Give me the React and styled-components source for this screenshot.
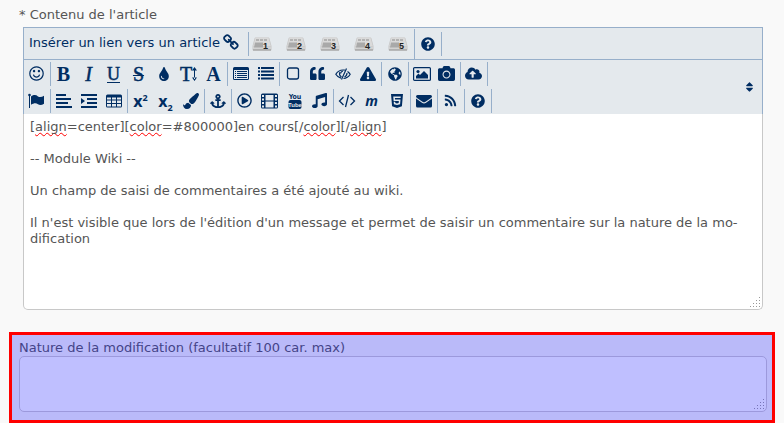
import React from "react";
import styled, { createGlobalStyle, css } from "styled-components";
import {
  FaTint, FaQuoteLeft, FaExclamationTriangle, FaGlobeAmericas, FaCamera,
  FaCloudUploadAlt, FaPaintBrush, FaAnchor, FaRegPlayCircle, FaMusic,
  FaHtml5, FaRss, FaQuestionCircle, FaSort,
} from "react-icons/fa";

const NAVY = "#002d62";
const LINE = "#97afca";

const GlobalStyle = createGlobalStyle`
  * { box-sizing: border-box; }
  body {
    margin: 0;
    background: #f9f9f9;
    color: #555;
    font: 13px/16px "DejaVu Sans", Verdana, sans-serif;
  }
  button, textarea { font: inherit; color: inherit; }
`;

const Form = styled.form`
  padding: 7px 9px 0;
`;

const Field = styled.div`
  padding: 0 12px 0 10px;
`;

const Label = styled.label`
  display: block;
`;

const Editor = styled.div`
  margin: 4px 0 0 4px;
`;

const Toolbar = styled.div`
  border: 1px solid ${LINE};
  border-bottom: 0;
  background: #e4e9ed;
  color: ${NAVY};
`;

const LinkBar = styled.div`
  display: flex;
  align-items: center;
  height: 32px;
  border-bottom: 1px solid ${LINE};
`;

const LinkGroup = styled.div`
  display: flex;
  align-items: center;
  gap: 8px;
  height: ${(p) => (p.$tall ? 30 : 24)}px;
  padding: ${(p) => p.$pad || "0"};
  border-right: 1px solid ${LINE};
`;

const LinkButton = styled.button`
  display: flex;
  align-items: center;
  justify-content: center;
  gap: 3px;
  padding: 0 0 2px;
  border: 0;
  background: none;
  white-space: nowrap;
  cursor: pointer;
`;

const SlotButton = styled(LinkButton)`
  width: 26px;
  padding: 0;
`;

const Tools = styled.div`
  display: flex;
  align-items: center;
  justify-content: space-between;
  padding-right: 8px;
`;

const ToolRows = styled.div`
  display: grid;
`;

const ToolRow = styled.div`
  display: flex;
  height: 27px;
  align-items: center;
`;

const ToolGroup = styled.div`
  display: flex;
  height: 24px;
  padding-right: 1px;
  border-right: 1px solid ${LINE};
`;

const ToolButton = styled.button`
  display: flex;
  align-items: center;
  justify-content: center;
  width: 25px;
  height: 24px;
  padding: 0;
  border: 0;
  background: none;
  line-height: 24px;
  cursor: pointer;
`;

const SortButton = styled(ToolButton)`
  width: 9px;
`;

const Glyph = styled.span`
  font-family: ${(p) => (p.$sans ? '"Open Sans", sans-serif' : '"Liberation Serif", serif')};
  font-size: ${(p) => p.$size || 20}px;
  font-weight: ${(p) => (p.$bold ? 700 : 400)};
  font-style: ${(p) => (p.$italic ? "italic" : "normal")};
  -webkit-text-stroke: ${(p) => (p.$bold ? "0" : `0.5px ${NAVY}`)};
  ${(p) => p.$line && css`
    text-decoration: ${p.$line};
    text-decoration-thickness: 1px;
    text-underline-offset: 2px;
  `}
  sup, sub { font-size: 9px; line-height: 0; }
`;

const Pair = styled.span`
  display: flex;
  align-items: center;
`;

const Box = styled.div`
  position: relative;
  display: grid;
  background: ${(p) => (p.$tinted ? "#bfbfff" : "#fff")};
  border: 1px solid ${(p) => (p.$tinted ? "#9c99dc" : "#c8c8c8")};
  border-radius: ${(p) => (p.$tinted ? "5px" : "0 0 5px 5px")};
  border-top-width: ${(p) => (p.$tinted ? 1 : 0)}px;
`;

const textLayout = css`
  grid-area: 1 / 1;
  margin: 0;
  padding: 5px 6px;
  border: 0;
  font: 13px/16px "DejaVu Sans", Verdana, sans-serif;
  white-space: pre-wrap;
  overflow-wrap: break-word;
`;

const TextArea = styled.textarea`
  ${textLayout}
  width: 100%;
  height: ${(p) => p.$height}px;
  background: transparent;
  color: #555;
  resize: none;
  outline: 0;
`;

const SpellLayer = styled.div`
  ${textLayout}
  color: transparent;
  user-select: none;
`;

const Misspelt = styled.span`
  text-decoration: underline wavy #f00;
  text-decoration-thickness: 1px;
  text-decoration-skip-ink: none;
`;

const GripMark = styled.svg`
  position: absolute;
  right: 1px;
  bottom: 1px;
  pointer-events: none;
`;

const Highlight = styled.div`
  margin-top: 22px;
  padding: 5px 5px 8px 7px;
  border: 3px solid #f00;
  background: #babaf9;
  color: #444488;
`;

const Grip = ({ color }) => (
  <GripMark width="12" height="12" fill={color} aria-hidden="true">
    {[0, 1, 2, 3].flatMap((r) =>
      Array.from({ length: r + 1 }, (_, c) => (
        <rect key={`${r}-${c}`} x={10 - c * 3} y={1 + r * 3} width="1" height="1" />
      ))
    )}
  </GripMark>
);

const Svg = ({ w = 16, h = 16, children, ...rest }) => (
  <svg width={w} height={h} viewBox={`0 0 ${w} ${h}`} fill="currentColor" aria-hidden="true" {...rest}>
    {children}
  </svg>
);

const Fa = ({ d, size = 17 }) => (
  <svg width={size} height={size} viewBox="0 0 1792 1792" fill="currentColor" aria-hidden="true">
    <path d={d} />
  </svg>
);

const CHAIN = "M1456 1216q0-40-28-68l-208-208q-28-28-68-28-42 0-72 32 3 3 19 18.5t21.5 21.5 15 19 13 25.5 3.5 27.5q0 40-28 68t-68 28q-15 0-27.5-3.5t-25.5-13-19-15-21.5-21.5-18.5-19q-33 31-33 73 0 40 28 68l206 207q27 27 68 27 40 0 68-26l147-146q28-28 28-67zm-703-705q0-40-28-68l-206-207q-28-28-68-28-39 0-68 27l-147 146q-28 28-28 67 0 40 28 68l208 208q27 27 68 27 42 0 72-31-3-3-19-18.5t-21.5-21.5-15-19-13-25.5-3.5-27.5q0-40 28-68t68-28q15 0 27.5 3.5t25.5 13 19 15 21.5 21.5 18.5 19q33-31 33-73zm895 705q0 120-85 203l-147 146q-83 83-203 83-121 0-204-85l-206-207q-83-83-83-203 0-123 88-209l-88-88q-86 88-208 88-120 0-204-84l-208-208q-84-84-84-204t85-203l147-146q83-83 203-83 121 0 204 85l206 207q83 83 83 203 0 123-88 209l88 88q86-88 208-88 120 0 204 84l208 208q84 84 84 204z";
const SMILE = "M1262 1075q-37 121-138 195t-228 74-228-74-138-195q-8-25 4-48.5t38-31.5q25-8 48.5 4t31.5 38q25 80 92.5 129.5t151.5 49.5 151.5-49.5 92.5-129.5q8-26 32-38t49-4 37 31.5 4 48.5zm-494-435q0 53-37.5 90.5t-90.5 37.5-90.5-37.5-37.5-90.5 37.5-90.5 90.5-37.5 90.5 37.5 37.5 90.5zm512 0q0 53-37.5 90.5t-90.5 37.5-90.5-37.5-37.5-90.5 37.5-90.5 90.5-37.5 90.5 37.5 37.5 90.5zm256 256q0-130-51-248.5t-136.5-204-204-136.5-248.5-51-248.5 51-204 136.5-136.5 204-51 248.5 51 248.5 136.5 204 204 136.5 248.5 51 248.5-51 204-136.5 136.5-204 51-248.5zm128 0q0 209-103 385.5t-279.5 279.5-385.5 103-385.5-103-279.5-279.5-103-385.5 103-385.5 279.5-279.5 385.5-103 385.5 103 279.5 279.5 103 385.5z";

const Drive = ({ n }) => (
  <Svg w={20} h={14}>
    <path d="M3.500.5h13q.8 0 1 1L19.500 9v3.500q0 1-1 1h-17q-1 0-1-1V9L2.500 1.500q.2-1 1-1z" fill="#c6c6c6" />
    <path d="M3.500.5h13l2.300 8.500H1.200z" fill="#dadada" />
    <path d="M1 9.500h18v2.500H1z" fill="#d2d2d2" />
    <path d="M4 3h11" stroke="#8c8c8c" strokeDasharray="3 1" />
    <path d="M3 5.500h8v5H2z" fill="#a9a9a9" />
    <path d="M1 13h18" stroke="#9a9a9a" />
    <text x="11" y="12" fontSize="9" fontWeight="700" fontFamily="Liberation Sans" fill="#222">{n}</text>
  </Svg>
);

const AlignLeft = () => (
  <Svg><path d="M0 1h10v2H0zM0 5h15v2H0zM0 9h12v2H0zM0 13h16v2H0z" /></Svg>
);
const Indent = () => (
  <Svg><path d="M0 1h16v2H0zM6 5h10v2H6zM6 9h10v2H6zM0 13h16v2H0zM0 5l4 3-4 3z" /></Svg>
);
const Table = () => (
  <Svg><path fillRule="evenodd" d="M1.500 1.500h13q1.500 0 1.500 1.500v10q0 1.500-1.500 1.500h-13Q0 14.500 0 13V3q0-1.500 1.500-1.500zM1 4.500v2h4v-2zM6 4.500v2h4v-2zM11 4.500v2h4v-2zM1 7.500v2.500h4V7.500zM6 7.500v2.500h4V7.500zM11 7.500v2.500h4V7.500zM1 11v2.500h4V11zM6 11v2.500h4V11zM11 11v2.500h4V11z" /></Svg>
);
const ListAlt = () => (
  <Svg><path fillRule="evenodd" d="M1.500 1h13Q16 1 16 2.500v10q0 1.500-1.500 1.500h-13Q0 14 0 12.500v-10Q0 1 1.500 1zM1 4v9h14V4zM2 5h1v1H2zM4 5h10v1H4zM2 7h1v1H2zM4 7h10v1H4zM2 9h1v1H2zM4 9h10v1H4zM2 11h1v1H2zM4 11h10v1H4z" /></Svg>
);
const List = () => (
  <Svg><path d="M0 1h2v2H0zM3 1h13v2H3zM0 4.500h2v2H0zM3 4.500h13v2H3zM0 8h2v2H0zM3 8h13v2H3zM0 11.500h2v2H0zM3 11.500h13v2H3z" /></Svg>
);
const Square = () => (
  <Svg w={14} h={14}><rect x="1.500" y="1" width="11" height="11" rx="2" fill="none" stroke="currentColor" strokeWidth="1.300" /></Svg>
);
const EyeSlash = () => (
  <Svg fill="none" stroke="currentColor" strokeWidth="1.200">
    <path d="M6 12.200C3.500 11.500 1.800 10 .8 8.300 2.500 5.500 5 4 8 4q1 0 1.800.2M12.500 5.500c1.200.8 2 1.700 2.700 2.800-1.600 2.600-4 4.100-6.700 4.200" />
    <path d="M11.500 2.500l-5 11M5 6q-1.500 3 1.500 5M12 7q0 3-2.500 4" />
    <path d="M8 5q-2 .3-2.500 2.500" />
  </Svg>
);
const Picture = () => (
  <Svg w={18}>
    <rect x="0.600" y="1.600" width="16.800" height="12.800" rx="1" fill="none" stroke="currentColor" strokeWidth="1.200" />
    <circle cx="5" cy="5.500" r="1.600" />
    <path d="M3 12.500V10l2.500-2.500L7 9l4-4 4 4v3.500z" />
  </Svg>
);
const Flag = () => (
  <Svg w={17}>
    <circle cx="1.500" cy="2" r="1.300" />
    <path d="M1 2h1v13H1zM3 3.500c3-2 5-1.700 7 0 2 1 4 .5 6-.8v8c-2 1.200-4 1.700-6 .6-2-1.500-4-1.300-7 .5z" />
  </Svg>
);
const Film = () => (
  <Svg w={17}>
    <path fillRule="evenodd" d="M1.500.5h14q1.500 0 1.500 1.500v12q0 1.500-1.500 1.500h-14Q0 15.500 0 14V2Q0 .5 1.500.5zM1 2v2h2V2zM1 5.500v2h2v-2zM1 9v2h2V9zM1 12.500v2h2v-2zM14 2v2h2V2zM14 5.500v2h2v-2zM14 9v2h2V9zM14 12.500v2h2v-2zM4.500 2v5.500h8V2zM4.500 8.500v6h8v-6z" />
  </Svg>
);
const YouTube = () => (
  <Svg w={14} h={18}>
    <text x="7" y="7" textAnchor="middle" fontFamily="DejaVu Sans Condensed, DejaVu Sans" fontSize="7" fontWeight="700">You</text>
    <rect x="0.500" y="8" width="13" height="9" rx="2" />
    <text x="7" y="15" textAnchor="middle" fontFamily="Liberation Sans" fontSize="6" fontWeight="700" fill="#e4e9ed">Tube</text>
  </Svg>
);
const Code = () => (
  <Svg w={18} fill="none" stroke="currentColor" strokeWidth="1.300">
    <path d="M5.500 4L1.500 8l4 4M12.500 4l4 4-4 4M10.500 2l-3 12" />
  </Svg>
);
const Envelope = () => (
  <Svg>
    <path d="M0 5.500l6 4.300q2 1.400 4 0l6-4.300V13q0 1.500-1.500 1.500h-13Q0 14.500 0 13z" />
    <path d="M1.500 2h13Q16 2 16 3.500q0 .7-1 1.500L9.500 8.700q-1.500 1-3 0L1 5Q0 4.200 0 3.500 0 2 1.500 2z" />
  </Svg>
);
const TextHeight = () => (
  <Pair>
    <Glyph>T</Glyph>
    <Svg w={5} h={16}><path d="M2 3h1v10H2zM0 4.500L2.500 1 5 4.500zM0 11.500L2.500 15 5 11.500z" /></Svg>
  </Pair>
);

const rows = [
  [
    [["Smileys", <Fa d={SMILE} />]],
    [
      ["Gras", <Glyph $bold>B</Glyph>],
      ["Italique", <Glyph $italic>I</Glyph>],
      ["Souligné", <Glyph $size={18} $line="underline">U</Glyph>],
      ["Barré", <Glyph $line="line-through">S</Glyph>],
      ["Couleur", <FaTint size={14} />],
      ["Taille", <TextHeight />],
      ["Police", <Glyph $bold>A</Glyph>],
    ],
    [["Bloc", <ListAlt />], ["Liste", <List />]],
    [
      ["Conteneur", <Square />],
      ["Citation", <FaQuoteLeft size={15} />],
      ["Texte caché", <EyeSlash />],
      ["Avertissement", <FaExclamationTriangle size={16} />],
    ],
    [["Lien", <FaGlobeAmericas size={14} />]],
    [["Image", <Picture />], ["Photo", <FaCamera size={17} />]],
    [["Envoyer un fichier", <FaCloudUploadAlt size={17} />]],
  ],
  [
    [["Ancre de titre", <Flag />]],
    [["Alignement", <AlignLeft />], ["Retrait", <Indent />], ["Tableau", <Table />]],
    [
      ["Exposant", <Glyph $sans $bold $size={16}>x<sup>2</sup></Glyph>],
      ["Indice", <Glyph $sans $bold $size={16}>x<sub>2</sub></Glyph>],
      ["Pinceau", <FaPaintBrush size={16} />],
    ],
    [["Ancre", <FaAnchor size={16} />]],
    [
      ["Lecture", <FaRegPlayCircle size={15} />],
      ["Film", <Film />],
      ["YouTube", <YouTube />],
      ["Musique", <FaMusic size={15} />],
    ],
    [
      ["Code", <Code />],
      ["Mathématiques", <Glyph $sans $bold $italic $size={14}>m</Glyph>],
      ["HTML", <FaHtml5 size={16} />],
    ],
    [["Courriel", <Envelope />]],
    [["Flux RSS", <FaRss size={13} />]],
    [["Aide", <FaQuestionCircle size={14} />]],
  ],
];

const CONTENT = `[align=center][color=#800000]en cours[/color][/align]

-- Module Wiki --

Un champ de saisi de commentaires a été ajouté au wiki.

Il n'est visible que lors de l'édition d'un message et permet de saisir un commentaire sur la nature de la mo\u00addification`;

export default function App() {
  return (
    <>
      <GlobalStyle />
      <Form onSubmit={(e) => e.preventDefault()}>
        <Field>
          <Label htmlFor="contents">* Contenu de l'article</Label>
          <Editor>
            <Toolbar>
              <LinkBar>
                <LinkGroup $pad="0 8px 0 5px">
                  <LinkButton type="button">
                    Insérer un lien vers un article <Fa d={CHAIN} size={17} />
                  </LinkButton>
                </LinkGroup>
                <LinkGroup $tall $pad="0 3px 0 0">
                  {[1, 2, 3, 4, 5].map((n) => (
                    <SlotButton key={n} type="button" aria-label={`Insérer un titre de niveau ${n}`}>
                      <Drive n={n} />
                    </SlotButton>
                  ))}
                </LinkGroup>
                <LinkGroup>
                  <SlotButton type="button" aria-label="Aide"><FaQuestionCircle size={14} /></SlotButton>
                </LinkGroup>
              </LinkBar>
              <Tools>
                <ToolRows>
                  {rows.map((groups, r) => (
                    <ToolRow key={r}>
                      {groups.map((group, g) => (
                        <ToolGroup key={g}>
                          {group.map(([name, icon]) => (
                            <ToolButton key={name} type="button" aria-label={name}>{icon}</ToolButton>
                          ))}
                        </ToolGroup>
                      ))}
                    </ToolRow>
                  ))}
                </ToolRows>
                <SortButton type="button" aria-label="Déplier"><FaSort size={12} /></SortButton>
              </Tools>
            </Toolbar>
            <Box>
              <SpellLayer aria-hidden="true">
                [<Misspelt>align</Misspelt>=center][<Misspelt>color</Misspelt>=#800000]en cours[/<Misspelt>color</Misspelt>][/<Misspelt>align</Misspelt>]
              </SpellLayer>
              <TextArea id="contents" $height={195} spellCheck={false} defaultValue={CONTENT} />
              <Grip color="#999" />
            </Box>
          </Editor>
        </Field>
        <Highlight>
          <Label htmlFor="change-reason">Nature de la modification (facultatif 100 car. max)</Label>
          <Box $tinted>
            <TextArea id="change-reason" $height={54} maxLength={100} />
            <Grip color="#7774b8" />
          </Box>
        </Highlight>
      </Form>
    </>
  );
}
